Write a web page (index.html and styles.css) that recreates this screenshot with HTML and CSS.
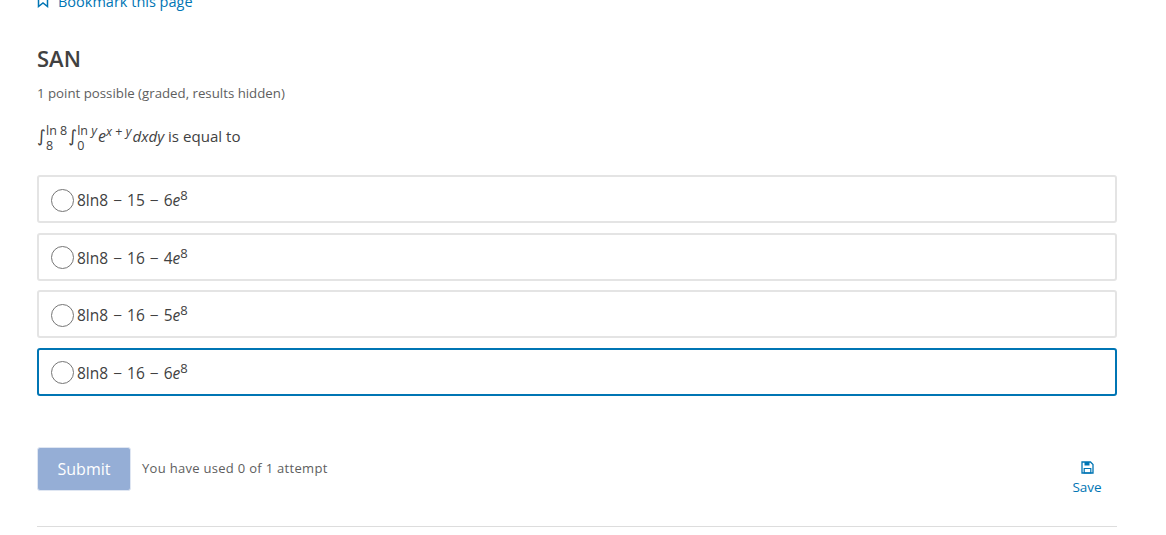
FILE: index.html
```html
<!DOCTYPE html>
<html>
    <head>
        <meta charset="UTF-8">
        <title>SAN</title>
        <link rel="stylesheet" href="styles.css">
    </head>
    <body>
        <div class="unit">
            <a class="bookmark">
                <svg class="bookmark_icon" width="12" height="14" viewBox="0 0 12 14"><path d="M1.5 1h9v11.5L6 9 1.5 12.5z" fill="none" stroke="#0075b4" stroke-width="1.5"/></svg>
                Bookmark this page
            </a>

            <h3 class="title">SAN</h3>
            <p class="points">1 point possible (graded, results hidden)</p>

            <p class="question"><span class="int">∫</span><span class="limits"><span>ln 8</span><span>8</span></span><span class="int">∫</span><span class="limits"><span>ln <i>y</i></span><span>0</span></span><i class="base">e</i><sup class="power"><i>x</i> + <i>y</i></sup><i>dxdy</i> is equal to</p>

            <div class="choices">
                <label class="choice"><span class="radio"></span><span class="formula">8ln8 <b>−</b> 15 <b>−</b> 6<i>e</i><sup>8</sup></span></label>
                <label class="choice"><span class="radio"></span><span class="formula">8ln8 <b>−</b> 16 <b>−</b> 4<i>e</i><sup>8</sup></span></label>
                <label class="choice"><span class="radio"></span><span class="formula">8ln8 <b>−</b> 16 <b>−</b> 5<i>e</i><sup>8</sup></span></label>
                <label class="choice selected"><span class="radio"></span><span class="formula">8ln8 <b>−</b> 16 <b>−</b> 6<i>e</i><sup>8</sup></span></label>
            </div>

            <div class="actions">
                <button class="submit">Submit</button>
                <span class="attempts">You have used 0 of 1 attempt</span>
                <a class="save">
                    <svg width="13" height="13" viewBox="0 0 13 13"><path d="M1 1h8.5L12 3.5V12H1z" fill="none" stroke="#0075b4" stroke-width="1.3"/><path d="M3.5 1h5v3.5h-5z" fill="#0075b4"/><path d="M3.2 7.5h6.6V12H3.2z" fill="none" stroke="#0075b4" stroke-width="1.2"/></svg>
                    <span>Save</span>
                </a>
            </div>

            <hr class="rule">
        </div>
    </body>
</html>
```

FILE: styles.css
```css
html,body{
    margin: 0;
    padding: 0;
    background: #fff;
}
body{
    height: 535px;
    overflow: hidden;
    font-family: "Open Sans", "Liberation Sans", sans-serif;
    color: #414141;
}
.unit{
    width: 1080px;
    margin: -10px 0 0 37px;
}
.bookmark{
    display: flex;
    align-items: center;
    gap: 9px;
    height: 22px;
    font-size: 14.5px;
    font-weight: 500;
    color: #0075b4;
}
.title{
    margin: 31px 0 0;
    font-size: 22px;
    line-height: 30px;
    font-weight: 600;
    color: #414141;
}
.points{
    margin: 11px 0 0;
    font-size: 13.25px;
    line-height: 18px;
    color: #5e5e5e;
}
.question{
    height: 30px;
    margin: 19px 0 0;
    font-size: 15.1px;
    line-height: 30px;
    white-space: nowrap;
}
.int{
    display: inline-block;
    width: 8px;
    font-size: 17px;
    font-family: "DejaVu Sans", sans-serif;
}
.limits{
    display: inline-flex;
    flex-direction: column;
    vertical-align: middle;
    font-size: 12.5px;
    line-height: 15px;
    margin: 0 1px 0 1px;
}
.base{
    font-size: 16px;
}
.power{
    font-size: 12.5px;
    line-height: 0;
    vertical-align: 6px;
    margin: 0 1px 0 0;
}
.choices{
    display: flex;
    flex-direction: column;
    gap: 9.5px;
    margin-top: 24px;
}
.choice{
    display: flex;
    align-items: center;
    gap: 3px;
    height: 48px;
    box-sizing: border-box;
    padding: 2px 12px 0;
    border: 2px solid #e4e4e4;
    border-radius: 3px;
    font-size: 15.5px;
}
.choice.selected{
    border-color: #0075b4;
}
.radio{
    width: 23px;
    height: 23px;
    box-sizing: border-box;
    border: 1px solid #767676;
    border-radius: 50%;
}
.formula b{
    font-weight: 400;
    margin: 0 1px;
}
.formula sup{
    font-size: 13px;
    line-height: 0;
}
.actions{
    display: flex;
    align-items: center;
    margin-top: 51px;
    height: 44px;
}
.submit{
    width: 94px;
    height: 44px;
    border: 1px solid #dfe6f2;
    border-radius: 3px;
    background: #95aed6;
    color: #fff;
    font-family: inherit;
    font-size: 16px;
    font-weight: 500;
}
.attempts{
    margin: 0 0 2px 11px;
    font-size: 13px;
    color: #5e5e5e;
    letter-spacing: 0.3px;
}
.save{
    display: flex;
    flex-direction: column;
    align-items: center;
    gap: 4px;
    margin-left: auto;
    width: 60px;
    font-size: 13.5px;
    color: #0075b4;
    position: relative;
    top: 10px;
}
.rule{
    margin: 35px 0 0;
    border: 0;
    border-top: 1px solid #ddd;
}
```
